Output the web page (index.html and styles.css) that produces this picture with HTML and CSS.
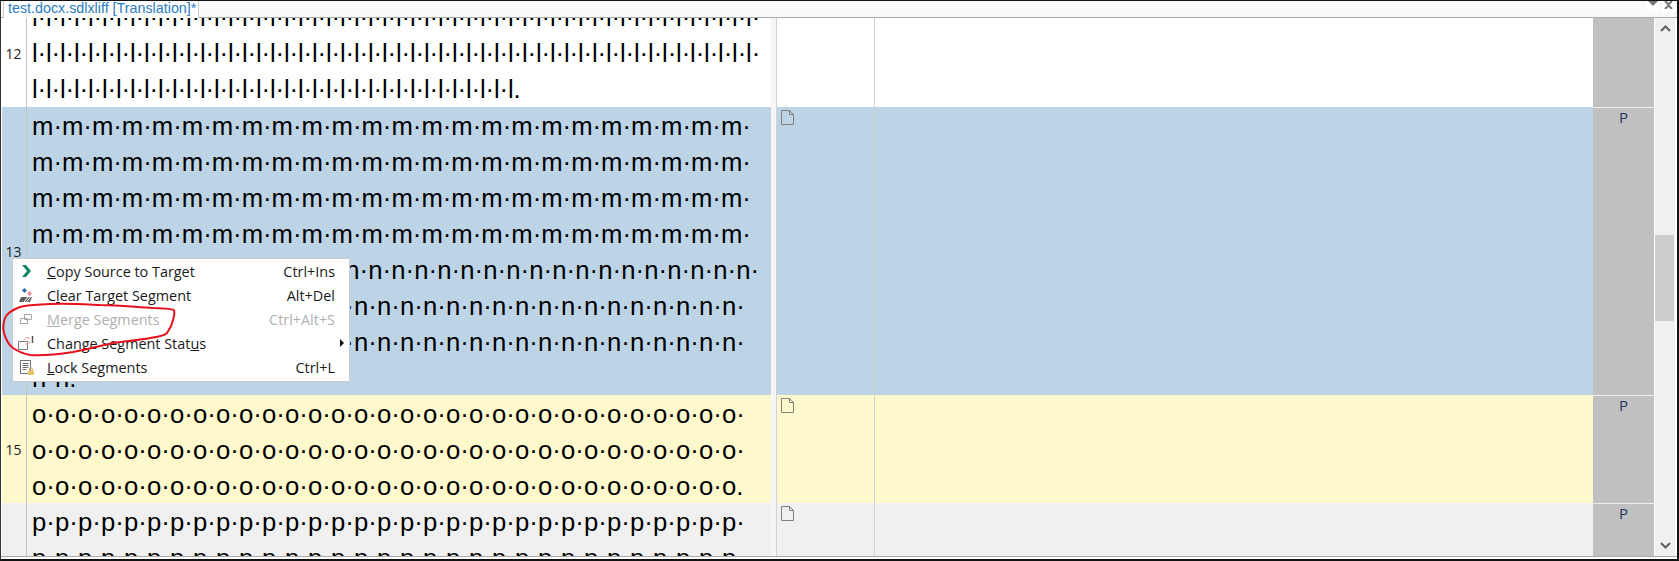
FILE: index.html
```html
<!DOCTYPE html>
<html lang="en">
<head>
    <meta charset="UTF-8">
    <title>test.docx.sdlxliff [Translation]*</title>
    <link rel="stylesheet" href="styles.css">
</head>
<body>
    <div class="window">
        <div class="tabstrip">
            <div class="tab">test.docx.sdlxliff [Translation]*</div>
            <div class="strip-btn strip-btn-first">
                <svg width="10" height="5" viewBox="0 0 10 5"><path d="M0 0h10L5 5z" fill="#777"/></svg>
            </div>
            <div class="strip-btn">
                <svg width="9" height="8" viewBox="0 0 9 8"><path d="M1 0l3.500 3.500L8 0M1 8l3.500-3.500L8 8" fill="none" stroke="#777" stroke-width="2"/></svg>
            </div>
        </div>

        <div class="editor">
            <div class="grid">
                <div class="row row-white row-clipped">
                    <div class="num num-top">12</div>
                    <div class="source source-narrow">l·l·l·l·l·l·l·l·l·l·l·l·l·l·l·l·l·l·l·l·l·l·l·l·l·l·l·l·l·l·l·l·l·l·l·l·l·l·l·l·l·l·l·l·l·l·l·l·l·l·l·l·
l·l·l·l·l·l·l·l·l·l·l·l·l·l·l·l·l·l·l·l·l·l·l·l·l·l·l·l·l·l·l·l·l·l·l·l·l·l·l·l·l·l·l·l·l·l·l·l·l·l·l·l·
l·l·l·l·l·l·l·l·l·l·l·l·l·l·l·l·l·l·l·l·l·l·l·l·l·l·l·l·l·l·l·l·l·l·l.</div>
                    <div class="gap"></div>
                    <div class="target"></div>
                    <div class="comment"></div>
                    <div class="status"></div>
                </div>

                <div class="row row-blue">
                    <div class="num">13</div>
                    <div class="source source-wide"><span class="source-plain">m·m·m·m·m·m·m·m·m·m·m·m·m·m·m·m·m·m·m·m·m·m·m·m·
m·m·m·m·m·m·m·m·m·m·m·m·m·m·m·m·m·m·m·m·m·m·m·m·
m·m·m·m·m·m·m·m·m·m·m·m·m·m·m·m·m·m·m·m·m·m·m·m·
m·m·m·m·m·m·m·m·m·m·m·m·m·m·m·m·m·m·m·m·m·m·m·m·</span>
m·m·n·n·n·n·n·n·n·n·n·n·n·n·n·n·n·n·n·n·n·n·n·n·n·n·n·n·n·n·n·
n·n·n·n·n·n·n·n·n·n·n·n·n·n·n·n·n·n·n·n·n·n·n·n·n·n·n·n·n·n·n·
n·n·n·n·n·n·n·n·n·n·n·n·n·n·n·n·n·n·n·n·n·n·n·n·n·n·n·n·n·n·n·
n·n.</div>
                    <div class="gap"></div>
                    <div class="target">
                        <svg class="doc-icon" width="13" height="15" viewBox="0 0 13 15"><path d="M.5.5h8l4 4v10H.5zM8.5.5v4h4" fill="none" stroke="#808080"/></svg>
                    </div>
                    <div class="comment"></div>
                    <div class="status">P</div>
                </div>

                <div class="row row-yellow">
                    <div class="num">15</div>
                    <div class="source source-wide">o·o·o·o·o·o·o·o·o·o·o·o·o·o·o·o·o·o·o·o·o·o·o·o·o·o·o·o·o·o·o·
o·o·o·o·o·o·o·o·o·o·o·o·o·o·o·o·o·o·o·o·o·o·o·o·o·o·o·o·o·o·o·
o·o·o·o·o·o·o·o·o·o·o·o·o·o·o·o·o·o·o·o·o·o·o·o·o·o·o·o·o·o·o.</div>
                    <div class="gap"></div>
                    <div class="target">
                        <svg class="doc-icon" width="13" height="15" viewBox="0 0 13 15"><path d="M.5.5h8l4 4v10H.5zM8.5.5v4h4" fill="none" stroke="#808080"/></svg>
                    </div>
                    <div class="comment"></div>
                    <div class="status">P</div>
                </div>

                <div class="row row-gray row-last">
                    <div class="num"></div>
                    <div class="source source-wide">p·p·p·p·p·p·p·p·p·p·p·p·p·p·p·p·p·p·p·p·p·p·p·p·p·p·p·p·p·p·p·
p·p·p·p·p·p·p·p·p·p·p·p·p·p·p·p·p·p·p·p·p·p·p·p·p·p·p·p·p·p·p·</div>
                    <div class="gap"></div>
                    <div class="target">
                        <svg class="doc-icon" width="13" height="15" viewBox="0 0 13 15"><path d="M.5.5h8l4 4v10H.5zM8.5.5v4h4" fill="none" stroke="#808080"/></svg>
                    </div>
                    <div class="comment"></div>
                    <div class="status">P</div>
                </div>
            </div>

            <div class="scrollbar">
                <svg width="11" height="7" viewBox="0 0 11 7"><path d="M1 6l4.500-4.500L10 6" fill="none" stroke="#606060" stroke-width="2"/></svg>
                <div class="scroll-track"><div class="scroll-thumb"></div></div>
                <svg width="11" height="7" viewBox="0 0 11 7"><path d="M1 1l4.500 4.500L10 1" fill="none" stroke="#606060" stroke-width="2"/></svg>
            </div>
        </div>

        <!-- menu contextual -->
        <div class="menu">
            <div class="menu-item">
                <svg width="16" height="16" viewBox="0 0 16 16"><path d="M4 2h4l5 6-5 6H4l5-6z" fill="#14885c"/></svg>
                <span><u>C</u>opy Source to Target</span>
                <span class="shortcut">Ctrl+Ins</span>
            </div>
            <div class="menu-item">
                <svg width="16" height="16" viewBox="0 0 16 16">
                    <path d="M6.500 1l2.500 2.500-2.500 2.500L4 3.500z" fill="#2d6cb0"/>
                    <path d="M11.500 4l2.500 2.500-2.500 2.500L9 6.500z" fill="#e58aa4"/>
                    <path d="M3 10h11l-2 5H1z" fill="#5f5f5f"/>
                    <path d="M6 15l4-5M8.500 15l4-5" stroke="#fff" stroke-width="1"/>
                </svg>
                <span>C<u>l</u>ear Target Segment</span>
                <span class="shortcut">Alt+Del</span>
            </div>
            <div class="menu-item menu-item-off">
                <svg width="16" height="16" viewBox="0 0 16 16"><path d="M6.500 3.500h7v5h-7zM2.500 7.500h7v5h-7z" fill="#fff" stroke="#a8a8a8"/></svg>
                <span><u>M</u>erge Segments</span>
                <span class="shortcut">Ctrl+Alt+S</span>
            </div>
            <div class="menu-item">
                <svg width="16" height="16" viewBox="0 0 16 16">
                    <path d="M.5 6.500h9v8h-9z" fill="#fff" stroke="#7c7c7c"/>
                    <path d="M6 5c1-3 5-3 6-1M12 6c-.5 3-3.500 4-5 2.500" fill="none" stroke="#e59a8a"/>
                    <path d="M14.500 1v7" stroke="#555" stroke-width="1.500"/>
                </svg>
                <span>Change Segment Stat<u>u</u>s</span>
                <span class="arrow"></span>
            </div>
            <div class="menu-item">
                <svg width="16" height="16" viewBox="0 0 16 16">
                    <path d="M2.500 1.500h10v13h-10z" fill="#fff" stroke="#707070"/>
                    <path d="M4.500 4.500h6M4.500 6.500h6M4.500 8.500h6M4.500 10.500h4" stroke="#707070"/>
                    <path d="M10 11.500h6V16h-6z" fill="#e8c560"/>
                    <path d="M11.500 11.500v-1a1.500 1.500 0 0 1 3 0v1" fill="none" stroke="#c9a640"/>
                </svg>
                <span><u>L</u>ock Segments</span>
                <span class="shortcut">Ctrl+L</span>
            </div>
        </div>

        <!-- marca roja a mano -->
        <svg class="scribble" width="180" height="70" viewBox="0 0 180 70">
            <path d="M174 10C172 9 160 8 153 8C135 7 118 5 100 5C80 4 65 3 50 4C35 5 27 5 20 7C12 10 7 13 5 18C3 24 3 29 4 33C6 40 9 45 13 48C19 52 25 54 30 55C45 56 60 54 73 52C88 49 100 46 113 43C127 41 140 40 150 38C158 37 164 36 167 33C170 29 172 25 173 20C174 16 175 13 174 10" fill="none" stroke="#e8101c" stroke-width="2"/>
        </svg>
    </div>
</body>
</html>
```

FILE: styles.css
```css
* {
    box-sizing: border-box;
}

body {
    margin: 0;
    font-family: "Liberation Sans", Arial, sans-serif;
}

.window {
    position: relative;
    display: flex;
    flex-direction: column;
    width: 1679px;
    height: 561px;
    background-color: white;
    border-top: 1px solid #111;
    border-left: 1px solid #333;
    border-right: 2px solid #111;
    border-bottom: 2px solid #111;
    padding-bottom: 2px;
    overflow: hidden;
}

/* Pestañas */
.tabstrip {
    display: flex;
    height: 17px;
    padding-left: 2px;
    padding-right: 2px;
    background-color: #fafafa;
    border-bottom: 1px solid #aaa;
}

.tab {
    width: 196px;
    height: 17px;
    padding-left: 4px;
    background-color: white;
    border-left: 1px solid #ccc;
    border-right: 1px solid #ccc;
    color: #2b7cc0;
    font-size: 14.3px;
    line-height: 15px;
    white-space: nowrap;
}

.strip-btn {
    display: flex;
    justify-content: center;
    width: 13px;
    height: 10px;
    margin-left: 3px;
    background-color: white;
}

.strip-btn-first {
    margin-left: auto;
}

/* Editor */
.editor {
    display: flex;
    flex: 1;
    min-height: 0;
    padding-left: 1px;
    border-bottom: 1px solid #aaa;
}

.grid {
    display: flex;
    flex-direction: column;
    width: 1652px;
    overflow: hidden;
}

.row {
    display: grid;
    grid-template-columns: 25px 744px 5px 99px 718px 61px;
    flex: none;
    overflow: hidden;
}

.row-clipped {
    height: 89px;
    background-color: white;
}

.row-blue {
    height: 288px;
    background-color: #bdd4e7;
}

.row-yellow {
    height: 108px;
    background-color: #fef8cd;
}

.row-gray {
    background-color: #f0f0f0;
}

.row-last {
    flex: 1;
    min-height: 0;
}

.num {
    display: flex;
    align-items: center;
    justify-content: center;
    padding-right: 1px;
    border-right: 1px solid #c4c4c4;
    font-family: "Open Sans", sans-serif;
    font-size: 14px;
    color: #222;
}

.num-top {
    align-items: flex-start;
    padding-top: 26px;
}

.source {
    padding-top: 1px;
    padding-left: 5px;
    font-size: 25.7px;
    line-height: 36px;
    white-space: pre;
    color: #000;
    overflow: hidden;
}

.source-wide {
    letter-spacing: 0.08px;
}

.source-plain {
    letter-spacing: 0;
}

.source-narrow {
    letter-spacing: -0.13px;
}

.row-clipped .source {
    display: flex;
    flex-direction: column;
    justify-content: flex-end;
    padding-top: 0;
}

.gap {
    background-color: #f5f5f5;
}

.target {
    padding: 3px 0 0 4px;
    border-left: 1px solid #d2d2d2;
    border-right: 1px solid #d2d2d2;
}

.doc-icon {
    display: block;
}

.status {
    background-color: #c0c0c0;
    border-top: 1px solid #eee;
    font-family: "Open Sans", sans-serif;
    font-size: 15px;
    line-height: 18px;
    text-align: center;
    color: #1d3557;
}

.row-clipped .status {
    border-top: none;
}

/* Barra de desplazamiento */
.scrollbar {
    display: flex;
    flex-direction: column;
    align-items: center;
    width: 20px;
    margin-left: 1px;
    padding: 7px 0;
    background-color: #f0f0f0;
}

.scroll-track {
    flex: 1;
    width: 100%;
    padding-top: 203px;
}

.scroll-thumb {
    width: 19px;
    height: 86px;
    background-color: #cdcdcd;
}

/* Menú contextual */
.menu {
    position: absolute;
    left: 11px;
    top: 257px;
    width: 338px;
    height: 124px;
    background-color: white;
    border: 1px solid #ccc;
    font-family: "Open Sans", sans-serif;
    font-size: 14.4px;
    color: #1a1a1a;
}

.menu-item {
    display: flex;
    align-items: center;
    height: 24px;
    padding-left: 5px;
    padding-right: 14px;
}

.menu-item svg {
    flex: none;
    margin-right: 13px;
}

.menu-item-off {
    color: #b0b0b0;
}

.shortcut {
    margin-left: auto;
}

.arrow {
    margin-left: auto;
    margin-right: -9px;
    border-left: 4px solid #111;
    border-top: 4px solid transparent;
    border-bottom: 4px solid transparent;
}

.scribble {
    position: absolute;
    left: -1px;
    top: 299px;
}
```
